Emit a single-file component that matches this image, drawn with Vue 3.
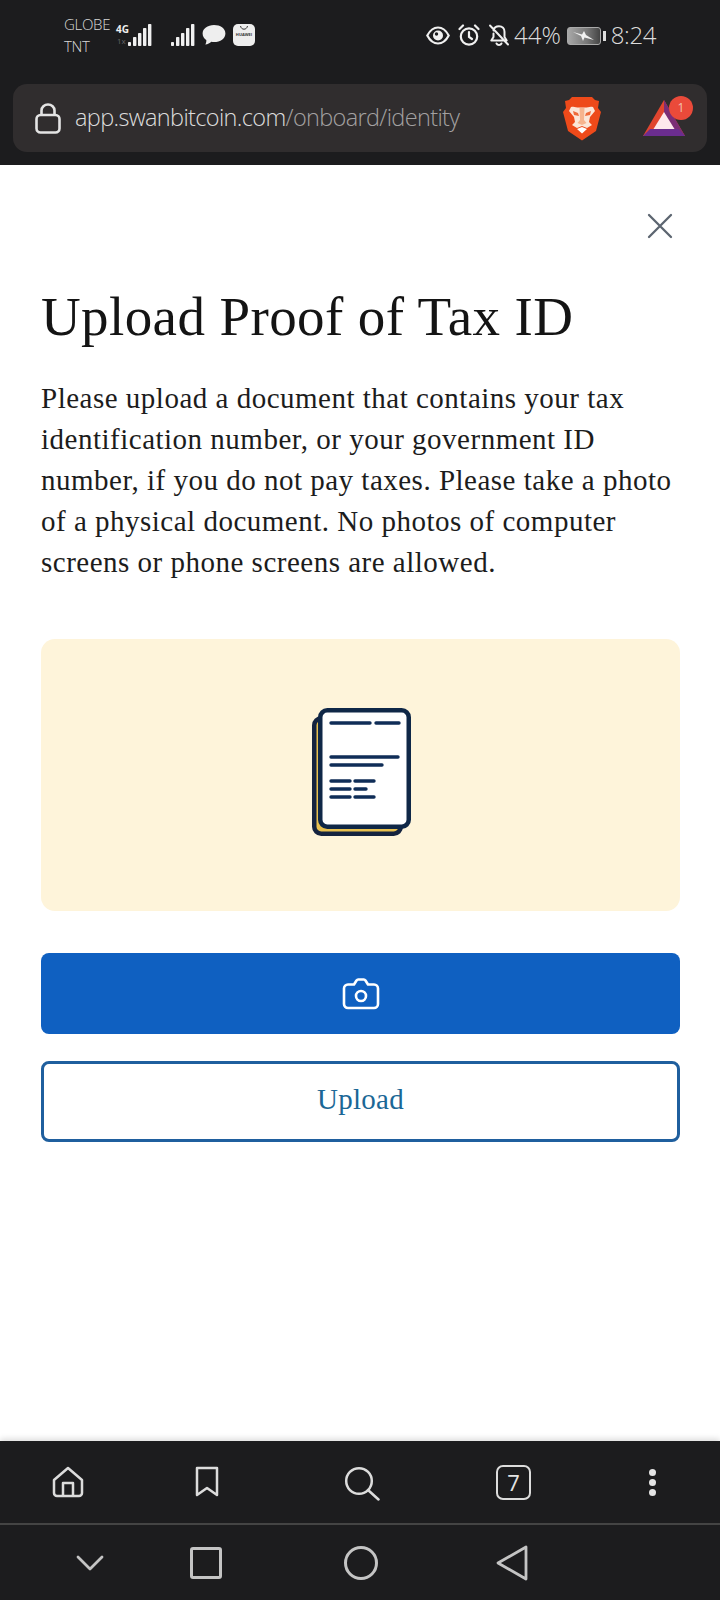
<template>
  <div class="phone">
    <header class="top">
      <div class="status">
        <div class="status-left">
          <div class="carriers"><span>GLOBE</span><span>TNT</span></div>
          <div class="net">
            <span class="net-4g">4G</span>
            <span class="net-1x">1x</span>
          </div>
          <svg class="signal" width="24" height="23" viewBox="0 0 24 23" fill="#f0f0f0">
            <rect x="0" y="18" width="3" height="4" rx=".8" /><rect x="5" y="13" width="3.400" height="9" rx=".8" /><rect x="10" y="9" width="3.400" height="13" rx=".8" /><rect x="15" y="4" width="3.400" height="18" rx=".8" /><rect x="20" y="0" width="3.400" height="22" rx=".8" />
          </svg>
          <svg class="signal signal-2" width="24" height="23" viewBox="0 0 24 23" fill="#f0f0f0">
            <rect x="0" y="18" width="3" height="4" rx=".8" /><rect x="5" y="13" width="3.400" height="9" rx=".8" /><rect x="10" y="9" width="3.400" height="13" rx=".8" /><rect x="15" y="4" width="3.400" height="18" rx=".8" /><rect x="20" y="0" width="3.400" height="22" rx=".8" />
          </svg>
          <svg class="bubble" width="24" height="22" viewBox="0 0 24 22" fill="#eee">
            <path d="M12 1C5.600 1 .6 4.600.6 9.400c0 3 1.900 5.400 3.700 6.600.2 1.400-.2 3-1 4.600 2.500-.3 4.500-1.300 6-2.800 1 .2 1.800.3 2.700.3 6.400 0 11.400-3.700 11.400-8.700S18.400 1 12 1z" />
          </svg>
          <div class="huawei">
            <svg width="10" height="7" viewBox="0 0 10 7" fill="none" stroke="#333" stroke-width="1"><path d="M1.500 2c.4 2 1.800 3.200 3.500 3.200S8.100 4 8.500 2" /></svg>
            <span>HUAWEI</span>
          </div>
        </div>
        <div class="status-right">
          <svg class="ic-eye" width="24" height="19" viewBox="0 0 24 19" fill="none" stroke="#f0f0f0" stroke-width="2.200">
            <path d="M1.300 9.500C4 4.300 7.800 1.500 12 1.500s8 2.800 10.700 8c-2.700 5.200-6.500 8-10.700 8s-8-2.800-10.700-8z" />
            <circle cx="12" cy="9.500" r="5" fill="#f0f0f0" stroke="none" />
            <circle cx="10.500" cy="8" r="1.700" fill="#1c1c1e" stroke="none" />
          </svg>
          <svg class="ic-alarm" width="22" height="22" viewBox="0 0 22 22" fill="none" stroke="#f0f0f0" stroke-width="2.200" stroke-linecap="round">
            <circle cx="11" cy="12.500" r="8.200" />
            <path d="M11 8v5l3 2M1.500 5 5 1.500M20.500 5 17 1.500" />
          </svg>
          <svg class="ic-bell" width="22" height="23" viewBox="0 0 22 23" fill="none" stroke="#f0f0f0" stroke-width="2" stroke-linecap="round" stroke-linejoin="round">
            <path d="M5.500 6.500C6 4 8 2.200 11 2.200c3.300 0 5.500 2.300 5.500 5.600V13l2.200 3.500H3.300L5.500 13V9.500M8.500 19.500c.5 1 1.300 1.500 2.500 1.500s2-.5 2.500-1.500M2 1.500l18 19" />
          </svg>
          <span class="pct">44%</span>
          <div class="battery">
            <div class="battery-body">
              <svg width="28" height="14" viewBox="0 0 28 14" fill="#f2f2f2"><path d="M3 3l9 2.500L14 2l2 4 8 5-9.500-2.500L13 12 11 7z" /></svg>
            </div>
            <div class="battery-cap"></div>
          </div>
          <span class="clock">8:24</span>
        </div>
      </div>
      <div class="urlbar">
        <svg class="lock" width="26" height="31" viewBox="0 0 26 31" fill="none" stroke="#e4e4e4" stroke-width="2.600" stroke-linejoin="round">
          <rect x="1.500" y="12" width="23" height="17.500" rx="4" />
          <path d="M6.500 12V7.500a6.500 6 0 0 1 13 0V12" />
        </svg>
        <div class="url"><span class="url-host">app.swanbitcoin.com</span>/onboard/identity</div>
        <svg class="brave" width="38" height="45" viewBox="0 0 38 45">
          <path d="M9 1h20l3 3 4 1-1 7 3 4-5 19-14 9.500L5 35 0 16l3-4-1-7 4-1z" fill="#ee4a1a" />
          <path d="M8 11c3-1 5 .5 8 .5h6c3 0 5-1.500 8-.5l2 4-5 6-1 5 3 3-5 3-5-2-5 2-5-3 3-3-1-5-5-6z" fill="#fbe6d8" />
          <path d="M10 15l5 2 1 3-5-1zM28 15l-5 2-1 3 5-1z" fill="#ef6a3a" />
          <path d="M16.500 12h5l-.5 12 2.500 3-4.500 2-4.500-2 2.500-3z" fill="#f6b48e" />
          <path d="M14 33l5-2 5 2-5 4.500z" fill="#fff" />
        </svg>
        <div class="bat">
          <svg width="42" height="36" viewBox="0 0 42 36">
            <path d="M21 0 42 36H0z" fill="#e0452f" />
            <path d="M21 0 42 36H30L21 14z" fill="#7b2d76" />
            <path d="M0 36l7-7h28l7 7z" fill="#6b2d8f" />
            <path d="M21 12l10.500 17h-21z" fill="#fde8ec" />
          </svg>
          <span class="bat-badge">1</span>
        </div>
      </div>
    </header>

    <main class="sheet">
      <div class="close-row">
        <svg width="26" height="26" viewBox="0 0 26 26" fill="none" stroke="#5c6570" stroke-width="2.300" stroke-linecap="round">
          <path d="M2 2l22 22M24 2 2 24" />
        </svg>
      </div>
      <h1 class="title">Upload Proof of Tax ID</h1>
      <p class="desc">Please upload a document that contains your tax identification number, or your government ID number, if you do not pay taxes. Please take a photo of a physical document. No photos of computer screens or phone screens are allowed.</p>
      <div class="doc-card">
        <svg width="100" height="130" viewBox="0 0 100 130" fill="none">
          <rect x="3.250" y="11.250" width="86.500" height="115.500" rx="7" fill="#e8c04f" stroke="#14233f" stroke-width="4.500" />
          <rect x="9.250" y="3.250" width="88.500" height="116.500" rx="7" fill="#fff" stroke="#0f2747" stroke-width="4.500" />
          <path d="M20 16h39M65 16h23M20 50h67M20 58h51M20 74h19M44 74h19M20 82h19M44 82h11M20 90h19M44 90h19" stroke="#0f2d57" stroke-width="3.400" stroke-linecap="round" />
        </svg>
      </div>
      <button class="btn btn-camera" type="button">
        <svg width="38" height="32" viewBox="0 0 38 32" fill="none" stroke="#fff" stroke-width="2.600" stroke-linejoin="round">
          <path d="M6 6.500h6l2.500-4c.4-.6 1-1 1.700-1h5.600c.7 0 1.300.4 1.700 1l2.500 4h6a4 4 0 0 1 4 4V26a4 4 0 0 1-4 4H6a4 4 0 0 1-4-4V10.500a4 4 0 0 1 4-4z" />
          <circle cx="19" cy="18" r="5" />
        </svg>
      </button>
      <button class="btn btn-upload" type="button">Upload</button>
    </main>

    <nav class="toolbar">
      <svg width="32" height="32" viewBox="0 0 32 32" fill="none" stroke="#dcdcdc" stroke-width="2.500" stroke-linejoin="round">
        <path d="M2 14 16 2l14 12v13a3 3 0 0 1-3 3H5a3 3 0 0 1-3-3z" />
        <path d="M11 30V17h10v13" />
      </svg>
      <svg width="24" height="32" viewBox="0 0 24 32" fill="none" stroke="#dcdcdc" stroke-width="2.500" stroke-linejoin="round">
        <path d="M2 2h20v27l-10-7-10 7z" />
      </svg>
      <svg width="36" height="36" viewBox="0 0 36 36" fill="none" stroke="#dcdcdc" stroke-width="2.500" stroke-linecap="round">
        <circle cx="15" cy="15" r="12.800" />
        <path d="M24 24l10.500 9.500" />
      </svg>
      <div class="tabs">7</div>
      <div class="dots"><i></i><i></i><i></i></div>
    </nav>
    <nav class="navbar">
      <svg width="28" height="16" viewBox="0 0 28 16" fill="none" stroke="#c4c4c4" stroke-width="2.800" stroke-linecap="round" stroke-linejoin="round">
        <path d="M2 2l12 12L26 2" />
      </svg>
      <div class="nav-square"></div>
      <div class="nav-circle"></div>
      <svg width="32" height="36" viewBox="0 0 32 36" fill="none" stroke="#c4c4c4" stroke-width="2.800" stroke-linejoin="round">
        <path d="M2 18 30 2v32z" />
      </svg>
    </nav>
  </div>
</template>

<script setup>
</script>

<style>
body {
  margin: 0;
  background: #fff;
}
</style>

<style scoped>
.phone {
  width: 720px;
  height: 1600px;
  display: flex;
  flex-direction: column;
  overflow: hidden;
  font-family: "Open Sans", "Noto Sans", sans-serif;
}

.top {
  height: 165px;
  background: #1c1c1e;
  box-sizing: border-box;
  flex-shrink: 0;
}

.status {
  height: 84px;
  display: flex;
  justify-content: space-between;
  padding: 14px 64px 0 64px;
  box-sizing: border-box;
  color: #d8d8d8;
}

.status-left {
  display: flex;
  align-items: flex-start;
}

.carriers {
  display: flex;
  flex-direction: column;
  font-size: 15px;
  font-weight: 300;
  line-height: 22px;
  letter-spacing: -0.3px;
  width: 52px;
  margin-top: -1px;
}

.net {
  position: relative;
  width: 12px;
  height: 24px;
  margin-top: 9px;
}

.net-4g {
  position: absolute;
  left: 0;
  top: 0;
  font-size: 10px;
  font-weight: 700;
  line-height: 12px;
  color: #eee;
}

.net-1x {
  position: absolute;
  left: 1px;
  top: 13px;
  font-size: 8px;
  line-height: 10px;
  color: #666;
}

.signal {
  margin-top: 10px;
}

.signal-2 {
  margin-left: 19px;
}

.bubble {
  margin: 10px 0 0 7px;
}

.huawei {
  width: 22px;
  height: 22px;
  margin: 10px 0 0 7px;
  background: #eee;
  border-radius: 5px;
  display: flex;
  flex-direction: column;
  align-items: center;
  color: #333;
  font-size: 4px;
  line-height: 7px;
  font-weight: 700;
}

.status-right {
  display: flex;
  align-items: flex-start;
  padding-top: 7px;
}

.ic-eye {
  margin-top: 5px;
}

.ic-alarm {
  margin: 3px 0 0 8px;
}

.ic-bell {
  margin: 3px 0 0 8px;
}

.pct,
.clock {
  font-size: 24px;
  font-weight: 300;
  line-height: 28px;
  color: #dcdcdc;
}

.pct {
  margin-left: 4px;
}

.clock {
  letter-spacing: -0.4px;
}

.battery {
  display: flex;
  align-items: center;
  height: 20px;
  margin: 5px 5px 0 6px;
}

.battery-body {
  width: 34px;
  height: 18px;
  border: 1px solid #aaa;
  border-radius: 3px;
  box-sizing: border-box;
  background: linear-gradient(90deg, #a8a8a8, #777 60%, #444);
  display: flex;
  align-items: center;
  justify-content: center;
}

.battery-cap {
  width: 3px;
  height: 10px;
  margin-left: 2px;
  background: #ddd;
}

.urlbar {
  height: 68px;
  margin: 0 13px;
  padding: 0 8px 0 22px;
  background: #302d2e;
  border-radius: 14px;
  display: flex;
  align-items: center;
}

.lock {
  flex-shrink: 0;
  margin-right: 14px;
}

.url {
  flex: 1;
  font-size: 23.500px;
  font-weight: 300;
  color: #a3a1a1;
  white-space: nowrap;
  letter-spacing: -0.65px;
  margin-top: -2px;
}

.url-host {
  color: #dcdcdc;
}

.brave {
  margin-right: 42px;
}

.bat {
  position: relative;
  width: 42px;
  height: 36px;
  margin: 0 14px 0 0;
}

.bat-badge {
  position: absolute;
  top: -4px;
  right: -8px;
  width: 24px;
  height: 24px;
  border-radius: 50%;
  background: #ea4a3a;
  color: #f3c0b0;
  font-size: 12px;
  line-height: 24px;
  text-align: center;
}

.sheet {
  flex: 1;
  background: #fff;
  border-radius: 4px 4px 0 0;
  padding: 48px 40px 0 41px;
  box-sizing: border-box;
  font-family: "Liberation Serif", serif;
}

.close-row {
  display: flex;
  justify-content: flex-end;
  padding-right: 7px;
  height: 26px;
}

.title {
  margin: 44px 0 0;
  font-size: 55px;
  line-height: 68px;
  font-weight: 400;
  letter-spacing: 0.4px;
  color: #141414;
}

.desc {
  margin: 27px 0 0;
  font-size: 29px;
  line-height: 41px;
  letter-spacing: 0.5px;
  color: #1c1c1c;
}

.doc-card {
  margin-top: 56px;
  height: 272px;
  box-sizing: border-box;
  padding-bottom: 6px;
  border-radius: 14px;
  background: #fef4da;
  display: flex;
  align-items: center;
  justify-content: center;
}

.btn {
  display: flex;
  align-items: center;
  justify-content: center;
  width: 100%;
  height: 81px;
  border-radius: 8px;
  box-sizing: border-box;
  padding: 0;
}

.btn-camera {
  margin-top: 42px;
  background: #0f60c1;
  border: none;
}

.btn-upload {
  margin-top: 27px;
  padding-bottom: 4px;
  background: #fff;
  border: 3px solid #1f5f9e;
  color: #1b6796;
  font-family: "Liberation Serif", serif;
  font-size: 29px;
  letter-spacing: 0.3px;
}

.toolbar,
.navbar {
  display: flex;
  align-items: center;
  background: #1c1c1e;
  flex-shrink: 0;
}

.toolbar {
  height: 84px;
  border-bottom: 2px solid #444;
  box-sizing: border-box;
  padding: 0 0 0 52px;
  box-shadow: 0 -2px 6px rgba(0, 0, 0, 0.15);
}

.toolbar > :nth-child(2) {
  margin-left: 111px;
}

.toolbar > :nth-child(3) {
  margin-left: 125px;
  margin-top: 3px;
}

.tabs {
  margin-left: 116px;
  width: 35px;
  height: 35px;
  box-sizing: border-box;
  border: 2.500px solid #dcdcdc;
  border-radius: 7px;
  color: #e4e4e4;
  font-size: 22px;
  line-height: 30px;
  text-align: center;
}

.dots {
  margin-left: 118px;
  display: flex;
  flex-direction: column;
  gap: 3px;
}

.dots i {
  display: block;
  width: 7px;
  height: 7px;
  border-radius: 50%;
  background: #e4e4e4;
}

.navbar {
  height: 75px;
  padding: 0 0 0 76px;
}

.nav-square {
  margin-left: 86px;
  width: 32px;
  height: 32px;
  box-sizing: border-box;
  border: 3px solid #c4c4c4;
  border-radius: 3px;
}

.nav-circle {
  margin-left: 122px;
  width: 34px;
  height: 34px;
  box-sizing: border-box;
  border: 3px solid #c4c4c4;
  border-radius: 50%;
}

.navbar > svg:last-child {
  margin-left: 118px;
}
</style>
